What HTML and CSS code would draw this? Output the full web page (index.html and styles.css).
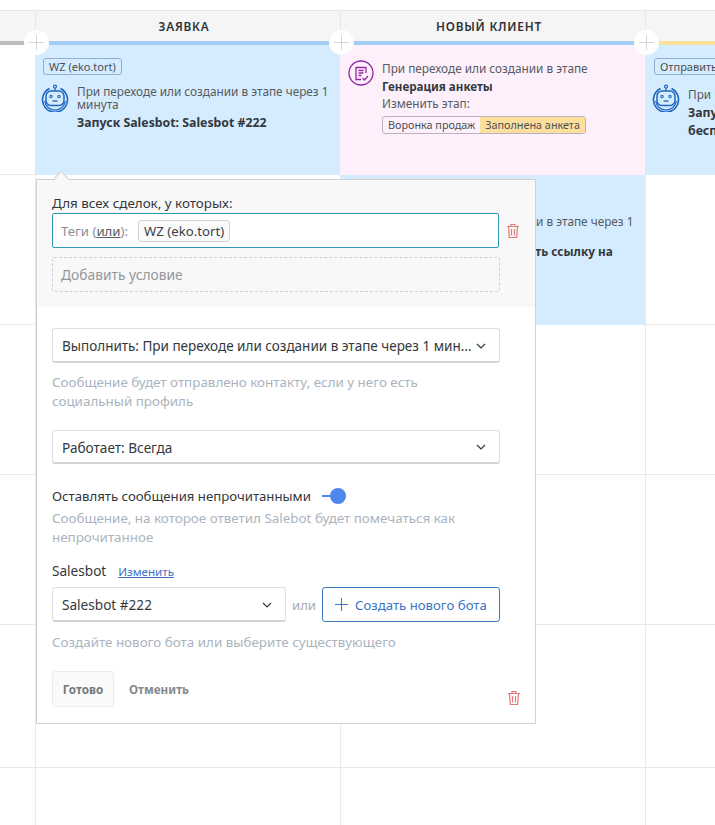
FILE: index.html
```html
<!DOCTYPE html>
<html lang="ru">
<head>
<meta charset="utf-8">
<title>Воронка</title>
<link rel="stylesheet" href="styles.css">
</head>
<body>
<svg class="defs" width="0" height="0">
  <symbol id="bot" viewBox="0 0 28 28">
    <g fill="none" stroke="#1f66c1">
      <path d="M8.500 4.500A12.500 12.500 0 1 0 19.500 4.500" stroke-width="1.600"/>
      <path d="M3.600 17a10.500 10.500 0 0 0 20.800 0" stroke-width="1.200"/>
      <rect x="5" y="7" width="18" height="14.500" rx="5" fill="#d5ecfe" stroke-width="1.500"/>
      <path d="M14 7V4" stroke-width="1.300"/><circle cx="14" cy="2.600" r="1.500" stroke-width="1.200"/>
      <circle cx="10" cy="12.500" r="1.200" stroke-width="1.100"/><circle cx="18" cy="12.500" r="1.200" stroke-width="1.100"/>
      <path d="M11.500 17h5" stroke-width="1.300"/>
    </g>
  </symbol>
  <symbol id="form" viewBox="0 0 26 26">
    <g fill="none" stroke="#8e2ba3" stroke-width="1.300">
      <circle cx="13" cy="13" r="12"/>
      <path d="M18 13V7.500H8v12h5"/>
      <path d="M10.500 10.500h5M10.500 13h5M10.500 15.500h3"/>
      <path d="M14.500 18l2 2 3.500-4"/>
    </g>
  </symbol>
  <symbol id="trash" viewBox="0 0 14 16">
    <g fill="none" stroke="#e27a7a" stroke-width="1.200">
      <path d="M1 3.500h12M5 3.500V1.500h4v2M2.500 3.500l.8 11h7.400l.8-11M5.500 6v6.500M8.500 6v6.500"/>
    </g>
  </symbol>
  <symbol id="chev" viewBox="0 0 10 6">
    <path d="M1 1l4 4 4-4" fill="none" stroke="#33383d" stroke-width="1.200"/>
  </symbol>
</svg>

<main class="board">
  <div class="head-row">
    <div class="head head-first"></div>
    <div class="head">ЗАЯВКА</div>
    <div class="head">НОВЫЙ КЛИЕНТ</div>
    <div class="head"></div>
  </div>
  <div class="bars">
    <div class="bar bar-gray"></div>
    <div class="bar bar-blue"></div>
    <div class="bar bar-blue"></div>
    <div class="bar bar-yellow"></div>
    <span class="plus plus-1"></span>
    <span class="plus plus-2"></span>
    <span class="plus plus-3"></span>
  </div>

  <div class="grid">
    <div class="cell row-a"></div>
    <div class="cell row-a card card-blue">
      <span class="tag">WZ (eko.tort)</span>
      <div class="rule">
        <svg class="ico-bot"><use href="#bot"/></svg>
        <div class="rule-text">
          <p class="muted tight">При переходе или создании в этапе через 1 минута</p>
          <p class="strong">Запуск Salesbot: Salesbot #222</p>
        </div>
      </div>
    </div>
    <div class="cell row-a card card-pink">
      <div class="rule rule-top">
        <svg class="ico-form"><use href="#form"/></svg>
        <div class="rule-text">
          <p class="muted">При переходе или создании в этапе</p>
          <p class="strong">Генерация анкеты</p>
          <p class="muted">Изменить этап:</p>
          <div class="stage"><span class="stage-a">Воронка продаж</span><span class="stage-b">Заполнена анкета</span></div>
        </div>
      </div>
    </div>
    <div class="cell row-a card card-blue card-clip">
      <span class="tag">Отправить сообщение</span>
      <div class="rule">
        <svg class="ico-bot"><use href="#bot"/></svg>
        <div class="rule-text rule-wide">
          <p class="muted tight">При переходе</p>
          <p class="strong">Запуск Salesbot:<br>бесплатно</p>
        </div>
      </div>
    </div>

    <div class="cell row-b"></div>
    <div class="cell row-b"></div>
    <div class="cell row-b card card-blue">
      <div class="rule rule-second">
        <svg class="ico-bot"><use href="#bot"/></svg>
        <div class="rule-text">
          <p class="muted tight">При переходе или создании в этапе через 1 минута</p>
          <p class="strong">Запуск Salesbot: Отправить ссылку на анкету</p>
        </div>
      </div>
    </div>
    <div class="cell row-b"></div>

    <div class="cell row-b"></div><div class="cell row-b"></div><div class="cell row-b"></div><div class="cell row-b"></div>
    <div class="cell row-b"></div><div class="cell row-b"></div><div class="cell row-b"></div><div class="cell row-b"></div>
    <div class="cell row-c"></div><div class="cell row-c"></div><div class="cell row-c"></div><div class="cell row-c"></div>
    <div class="cell row-d"></div><div class="cell row-d"></div><div class="cell row-d"></div><div class="cell row-d"></div>
  </div>

  <section class="popup">
    <span class="notch"></span>
    <div class="filter">
      <p class="filter-title">Для всех сделок, у которых:</p>
      <div class="filter-line">
        <div class="cond"><span class="cond-label">Теги (<u>или</u>):</span><span class="cond-tag">WZ (eko.tort)</span></div>
        <svg class="trash"><use href="#trash"/></svg>
      </div>
      <div class="add">Добавить условие</div>
    </div>
    <div class="form">
      <div class="select select-full"><span class="select-text select-long">Выполнить: При переходе или создании в этапе через 1 минуту</span><svg class="chev"><use href="#chev"/></svg></div>
      <p class="hint hint-1">Сообщение будет отправлено контакту, если у него есть<br>социальный профиль</p>
      <div class="select select-full select-2"><span class="select-text">Работает: Всегда</span><svg class="chev"><use href="#chev"/></svg></div>
      <div class="toggle-row"><span>Оставлять сообщения непрочитанными</span><span class="toggle"><i class="knob"></i></span></div>
      <p class="hint">Сообщение, на которое ответил Salebot будет помечаться как<br>непрочитанное</p>
      <div class="bot-title"><span>Salesbot</span><a class="link" href="#">Изменить</a></div>
      <div class="bot-line">
        <div class="select select-bot"><span class="select-text">Salesbot #222</span><svg class="chev"><use href="#chev"/></svg></div>
        <span class="or">или</span>
        <button class="create"><span class="create-plus"></span>Создать нового бота</button>
      </div>
      <p class="hint hint-3">Создайте нового бота или выберите существующего</p>
      <div class="actions">
        <button class="done">Готово</button>
        <button class="cancel">Отменить</button>
        <svg class="trash trash-bottom"><use href="#trash"/></svg>
      </div>
    </div>
  </section>
</main>
</body>
</html>
```

FILE: styles.css
```css
* { box-sizing: border-box; }
html, body { margin: 0; padding: 0; height: 825px; overflow: hidden; background: #fff; }
body { font-family: "Noto Sans", "Open Sans", sans-serif; font-size: 13.2px; color: #33383d; }
p { margin: 0; }
.defs { position: absolute; }
.board { position: relative; margin-top: 10px; width: 715px; height: 815px; overflow: hidden; }

.head-row { display: grid; grid-template-columns: 35px 305px 305px 70px; height: 31px; background: #f5f5f5; border-top: 1px solid #e8e8e8; }
.head { display: flex; align-items: center; justify-content: center; padding-right: 8px; font-size: 11.8px; font-weight: 600; letter-spacing: 0.8px; color: #2e3338; border-left: 1px solid #e6e6e6; }
.head-first { border-left: 0; }

.bars { position: relative; display: grid; grid-template-columns: 35px 305px 305px 70px; height: 4px; background: #f5f5f5; }
.bar-gray { background: #bdbdbd; }
.bar-blue { background: #a3cdf4; }
.bar-yellow { background: #fbe09b; }
.plus { position: absolute; top: -11px; width: 25px; height: 25px; border-radius: 50%; background-color: #fff; background-image: linear-gradient(#d5d5d5, #d5d5d5), linear-gradient(#d5d5d5, #d5d5d5); background-size: 15px 1px, 1px 15px; background-position: center; background-repeat: no-repeat; }
.plus-1 { left: 24px; }
.plus-2 { left: 329px; }
.plus-3 { left: 634px; }

.grid { display: grid; grid-template-columns: 35px 305px 305px 70px; }
.cell { border-left: 1px solid #e9e9e9; border-bottom: 1px solid #e9e9e9; }
.cell:nth-child(4n+1) { border-left: 0; }
.row-a { height: 130px; }
.row-b { height: 150px; }
.row-c { height: 143px; }
.row-d { height: 60px; }

.card { border-left: 0; border-bottom: 0; overflow: hidden; font-size: 11.8px; line-height: 13px; }
.card-blue { background: #d5ecfe; padding: 13px 2px 13px 8px; }
.card-pink { background: #fef0fb; padding: 14px 8px; }
.card-clip { padding-left: 9px; }
.tag { display: inline-block; height: 17px; padding: 0 5px; border: 1px solid #8eb0d3; border-radius: 3px; font-size: 11px; line-height: 15px; color: #4a5056; white-space: nowrap; }
.rule { display: flex; gap: 8px; margin-top: 8px; }
.rule-top { margin-top: 0; }
.rule-second { margin-top: 25px; }
.ico-bot { flex: none; width: 28px; height: 28px; margin-top: 1px; margin-left: -2px; }
.ico-form { flex: none; width: 26px; height: 26px; margin-top: 1px; }
.rule-text { flex: 1; min-width: 0; padding-top: 2px; }
.rule-wide { white-space: nowrap; padding-top: 5px; }
.muted { color: #555b61; line-height: 14px; }
.muted.tight { line-height: 13px; }
.strong { margin-top: 3px; font-weight: 700; color: #33383d; font-size: 12.3px; line-height: 18px; }
.rule-second .strong { margin-top: 1px; font-size: 11.8px; }
.card-pink .strong { margin: 3px 0 0; font-size: 11.6px; }
.stage { display: inline-flex; margin-top: 6px; height: 18px; border: 1px solid #b9b2c2; border-radius: 3px; overflow: hidden; font-size: 10.8px; line-height: 16px; white-space: nowrap; }
.stage-a { padding: 0 5px; color: #4a5056; }
.stage-b { padding: 0 5px; background: #fcdf9d; color: #4a5056; }

.popup { position: absolute; left: 36px; top: 169px; width: 500px; height: 545px; background: #fff; border: 1px solid #cfd2d4; z-index: 2; }
.notch { position: absolute; left: 20px; top: -6px; width: 10px; height: 10px; background: #f8f8f8; border-top: 1px solid #d5d5d5; border-left: 1px solid #d5d5d5; transform: rotate(45deg) scaleX(1.3); }
.filter { position: relative; height: 127px; padding: 14px 15px 0; background: #f8f8f8; }
.filter-title { font-size: 13.4px; line-height: 18px; color: #33383d; }
.filter-line { display: flex; align-items: center; gap: 7px; margin-top: 1px; }
.cond { display: flex; align-items: center; gap: 10px; width: 448px; height: 35px; padding: 0 8px; background: #fff; border: 1px solid #2a97b5; border-radius: 2px; }
.cond-label { color: #8a8f93; }
.cond-label u { color: #555b61; }
.cond-tag { height: 22px; padding: 0 5px; border: 1px solid #d4d4d4; border-radius: 3px; background: #fafafa; line-height: 20px; color: #3c4146; }
.trash { width: 14px; height: 16px; flex: none; }
.add { width: 448px; height: 35px; margin-top: 9px; padding: 0 8px; border: 1px dashed #cfcfcf; border-radius: 2px; font-size: 13.8px; color: #92979b; line-height: 33px; }

.form { padding: 21px 15px 0; }
.select { display: flex; align-items: center; justify-content: space-between; height: 35px; padding: 1px 13px 0 9px; background: #fff; border: 1px solid #e0e0e0; border-bottom: 2px solid #d4d4d4; border-radius: 3px; font-size: 13.6px; }
.select-full { width: 448px; }
.select-text { overflow: hidden; white-space: nowrap; text-overflow: ellipsis; }
.select-long { max-width: 412px; font-size: 13.5px; }
.chev { width: 10px; height: 6px; flex: none; }
.hint { color: #a9b4c0; font-size: 13.4px; line-height: 19px; margin-top: 4px; }
.hint-1 { margin-top: 10px; }
.select-2 { margin-top: 19px; height: 34px; }
.toggle-row { display: flex; align-items: center; gap: 11px; height: 18px; margin-top: 23px; }
.toggle { position: relative; width: 24px; height: 16px; flex: none; }
.toggle::before { content: ""; position: absolute; left: 0; top: 7px; width: 14px; height: 2px; background: #4f86ed; }
.knob { position: absolute; right: 0; top: 0; width: 16px; height: 16px; border-radius: 50%; background: #4f86ed; }
.bot-title { display: flex; align-items: baseline; gap: 12px; height: 19px; margin-top: 14px; font-size: 13.6px; }
.link { color: #3a75c4; font-size: 11.6px; }
.bot-line { display: flex; align-items: center; margin-top: 7px; }
.select-bot { width: 234px; }
.or { width: 36px; text-align: center; color: #a6abaf; }
.create { display: flex; align-items: center; gap: 7px; width: 178px; height: 35px; padding: 0 12px; background: #fff; border: 1px solid #3a78bf; border-radius: 3px; color: #3a75c4; font: inherit; font-size: 13.2px; white-space: nowrap; }
.create-plus { flex: none; width: 13px; height: 13px; background-image: linear-gradient(#3a75c4, #3a75c4), linear-gradient(#3a75c4, #3a75c4); background-size: 13px 1px, 1px 13px; background-position: center; background-repeat: no-repeat; }
.hint-3 { margin-top: 11px; }
.actions { position: relative; display: flex; align-items: center; gap: 15px; margin-top: 19px; }
.done { width: 62px; height: 36px; padding: 0; background: #fafafa; border: 1px solid #ececec; border-radius: 3px; font: inherit; font-size: 11.7px; font-weight: 700; color: #73787c; }
.cancel { padding: 0; background: none; border: 0; font: inherit; font-size: 11.7px; font-weight: 700; color: #85898d; }
.trash-bottom { position: absolute; right: -1px; top: 19px; }
```
